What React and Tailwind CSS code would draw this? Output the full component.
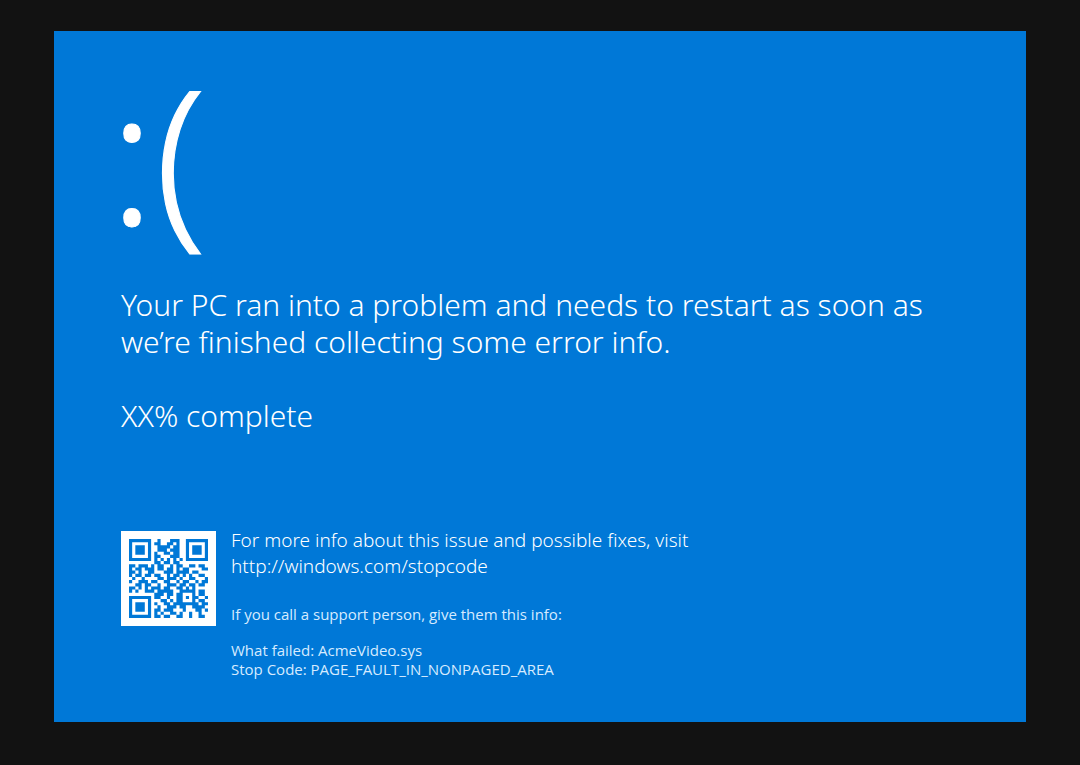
const QR_ROWS = [
  "#######..#...###..#######",
  "#.....#.##..##.#..#.....#",
  "#.###.#..####.##..#.###.#",
  "#.###.#..###.###..#.###.#",
  "#.###.#.#..##.##..#.###.#",
  "#.....#.##...###..#.....#",
  "#######.#.#.#.#.#.#######",
  "........##.##.##.........",
  "##.###.#.##..#.##..##.##.",
  "#.##.###.##.##.#.##....##",
  "##.#..##...###.####.##...",
  "#.##.##.##..#.##.#.#..##.",
  ".#..#....##.###.#..##...#",
  "#..###.##..##..#.##..#.##",
  "..##.##..#..###.##.##.##.",
  "##.#.#.###.##..##.#.#....",
  "#.#..###.#####..#####.##.",
  "........###.##.##...#.##.",
  "#######.##..#..##.#.##..#",
  "#.....#...##.#.##...#.##.",
  "#.###.#.#..##.########.##",
  "#.###.#..#..###.##..####.",
  "#.###.#.##.###...#...##.#",
  "#.....#.#.#..##.#..#..#..",
  "#######.##.##..##..#..##.",
];

function QrCode() {
  const modules = QR_ROWS.flatMap((row, y) =>
    [...row].map((cell, x) => (cell === "#" ? `M${x} ${y}h1v1h-1z` : ""))
  ).join("");
  return (
    <svg viewBox="0 0 25 25" className="w-full" role="img" aria-label="QR code">
      <path fill="#0078d7" d={modules} />
    </svg>
  );
}

export default function App() {
  return (
    <div className="min-h-screen bg-[#121212] px-[5%] pt-[31px] pb-[43px] font-['Open_Sans','Noto_Sans',sans-serif] text-white">
      <main className="bg-[#0078d7] px-[67px] pt-[46px] pb-[43px]">
        <p className="-ml-3 mb-[57px] font-['Noto_Sans',sans-serif] text-[187px] leading-[152px] font-light [-webkit-text-stroke:1px_white]">
          :(
        </p>

        <h1 className="font-['Noto_Sans',sans-serif] text-[30px] leading-[37px] font-light">
          Your PC ran into a problem and needs to restart as soon as we’re
          finished collecting some error info.
        </h1>
        <p className="mt-[37px] font-['Noto_Sans',sans-serif] text-[30px] leading-[37px] font-light">
          XX% complete
        </p>

        <section className="mt-[97px] flex items-start gap-[15px]">
          <div className="w-[95px] shrink-0 bg-white p-2">
            <QrCode />
          </div>
          <div>
            <p className="-mt-1 font-['Noto_Sans',sans-serif] text-[19px] leading-[26px] font-light">
              For more info about this issue and possible fixes, visit
              <br />
              <a href="http://windows.com/stopcode">http://windows.com/stopcode</a>
            </p>
            <p className="mt-[26px] text-[15px] leading-[19px] text-[#d6ebff]">
              If you call a support person, give them this info:
            </p>
            <p className="mt-[17px] text-[15px] leading-[19px] text-[#d6ebff]">
              What failed: AcmeVideo.sys
              <br />
              Stop Code: PAGE_FAULT_IN_NONPAGED_AREA
            </p>
          </div>
        </section>
      </main>
    </div>
  );
}
